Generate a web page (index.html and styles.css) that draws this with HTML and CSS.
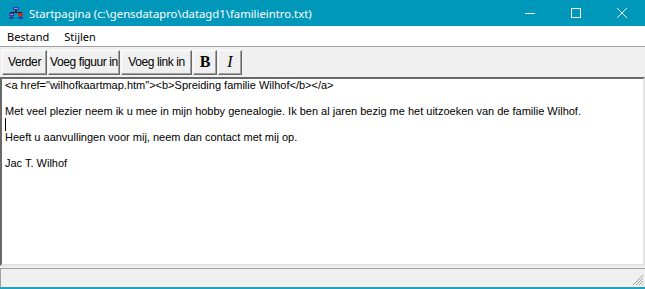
FILE: index.html
```html
<!DOCTYPE html>
<html lang="nl">
<head>
    <meta charset="UTF-8">
    <title>Startpagina</title>
    <link rel="stylesheet" href="styles.css">
</head>
<body>
    <div class="window">
        <div class="titlebar">
            <svg class="app-icon" viewBox="0 0 14 12" width="14" height="12">
                <rect x="4" y="0" width="6" height="3" fill="#3a3aa8"/>
                <rect x="5" y="1" width="4" height="1" fill="#8888ff"/>
                <rect x="6" y="3" width="2" height="2" fill="#222"/>
                <rect x="1" y="5" width="12" height="1" fill="#222"/>
                <rect x="0" y="6" width="5" height="3" fill="#3a3aa8"/>
                <rect x="9" y="6" width="5" height="3" fill="#c03030"/>
                <rect x="1" y="7" width="3" height="1" fill="#8888ff"/>
                <rect x="2" y="9" width="1" height="1" fill="#222"/>
                <rect x="11" y="9" width="1" height="1" fill="#222"/>
                <rect x="0" y="10" width="5" height="2" fill="#3a3aa8"/>
                <rect x="9" y="10" width="5" height="2" fill="#3a3aa8"/>
            </svg>
            <span class="title">Startpagina (c:\gensdatapro\datagd1\familieintro.txt)</span>
            <div class="caption-btns">
                <span class="cap-btn">
                    <svg viewBox="0 0 10 10" width="10" height="10"><path d="M0 5.5H10" stroke="#fff" stroke-width="1"/></svg>
                </span>
                <span class="cap-btn">
                    <svg viewBox="0 0 10 10" width="10" height="10"><rect x="0.5" y="0.5" width="9" height="9" fill="none" stroke="#fff" stroke-width="1"/></svg>
                </span>
                <span class="cap-btn">
                    <svg viewBox="0 0 10 10" width="10" height="10"><path d="M0 0L10 10M10 0L0 10" stroke="#fff" stroke-width="1"/></svg>
                </span>
            </div>
        </div>

        <div class="menubar">
            <span class="menu-item">Bestand</span>
            <span class="menu-item">Stijlen</span>
        </div>

        <div class="toolbar">
            <button class="tool-btn btn-verder">Verder</button>
            <button class="tool-btn btn-figuur">Voeg figuur in</button>
            <button class="tool-btn btn-link">Voeg link in</button>
            <button class="tool-btn btn-bold">B</button>
            <button class="tool-btn btn-italic">I</button>
        </div>

        <div class="editor">
            <div class="line">&lt;a href="wilhofkaartmap.htm"&gt;&lt;b&gt;Spreiding familie Wilhof&lt;/b&gt;&lt;/a&gt;</div>
            <div class="line">&nbsp;</div>
            <div class="line">Met veel plezier neem ik u mee in mijn hobby genealogie. Ik ben al jaren bezig me het uitzoeken van de familie Wilhof.</div>
            <div class="line"><span class="caret"></span></div>
            <div class="line">Heeft u aanvullingen voor mij, neem dan contact met mij op.</div>
            <div class="line">&nbsp;</div>
            <div class="line">Jac T. Wilhof</div>
        </div>

        <div class="statusbar">
            <svg class="grip" viewBox="0 0 12 12" width="12" height="12">
                <path d="M11 1L1 11M11 4L4 11M11 7L7 11M11 10L10 11" stroke="#a0a0a0" stroke-width="1"/>
            </svg>
        </div>
    </div>
</body>
</html>
```

FILE: styles.css
```css
* {
    margin: 0;
    padding: 0;
    box-sizing: border-box;
}

body {
    width: 645px;
    height: 289px;
    overflow: hidden;
    background-color: #f0f0f0;
}

.window {
    display: flex;
    flex-direction: column;
    height: 289px;
    border-bottom: 2px solid #1ea2c2;
}

.titlebar {
    height: 26px;
    display: flex;
    align-items: center;
    background-color: #0098ba;
    color: #ffffff;
    font-family: 'Noto Sans', 'Open Sans', sans-serif;
    font-size: 11.3px;
}

.app-icon {
    margin-left: 9px;
    margin-right: 6px;
}

.title {
    flex: 1;
    white-space: nowrap;
}

.caption-btns {
    display: flex;
    height: 100%;
}

.cap-btn {
    width: 46px;
    height: 100%;
    display: flex;
    align-items: center;
    justify-content: center;
}

.menubar {
    height: 20px;
    display: flex;
    align-items: center;
    padding-left: 7px;
    gap: 15px;
    background-color: #ffffff;
    font-family: 'Noto Sans', 'Open Sans', sans-serif;
    font-size: 11px;
    color: #000000;
}

.toolbar {
    height: 31px;
    display: flex;
    align-items: center;
    gap: 1px;
    padding-left: 2px;
    border-top: 1px solid #a0a0a0;
    background-color: #f0f0f0;
}

.tool-btn {
    height: 25px;
    padding: 0;
    white-space: nowrap;
    background-color: #f0f0f0;
    border-top: 1px solid #ffffff;
    border-left: 1px solid #ffffff;
    border-right: 1px solid #696969;
    border-bottom: 1px solid #696969;
    box-shadow: inset -1px -1px 0 #a0a0a0;
    font-family: 'Liberation Sans', Arial, sans-serif;
    font-size: 12px;
    letter-spacing: -0.4px;
    color: #000000;
}

.btn-verder { width: 45px; }
.btn-figuur { width: 72px; }
.btn-link { width: 71px; }

.btn-bold,
.btn-italic {
    width: 24px;
    font-family: 'Liberation Serif', 'Times New Roman', serif;
    font-size: 16px;
    letter-spacing: 0;
}

.btn-bold { font-weight: bold; }
.btn-italic { font-style: italic; }

.editor {
    flex: 1;
    background-color: #ffffff;
    border-top: 2px solid #696969;
    border-left: 2px solid #696969;
    border-right: 2px solid #e3e3e3;
    border-bottom: 2px solid #e3e3e3;
    padding: 0 3px;
    font-family: 'Liberation Sans', Arial, sans-serif;
    font-size: 11px;
    line-height: 13px;
    color: #000000;
}

.caret {
    display: inline-block;
    width: 1px;
    height: 13px;
    vertical-align: top;
    background-color: #000000;
}

.statusbar {
    height: 19px;
    margin-top: 2px;
    display: flex;
    justify-content: flex-end;
    align-items: flex-end;
    background-color: #f0f0f0;
    border-top: 1px solid #a0a0a0;
    border-left: 1px solid #a0a0a0;
}

.grip {
    margin-right: 1px;
    margin-bottom: 1px;
}
```
